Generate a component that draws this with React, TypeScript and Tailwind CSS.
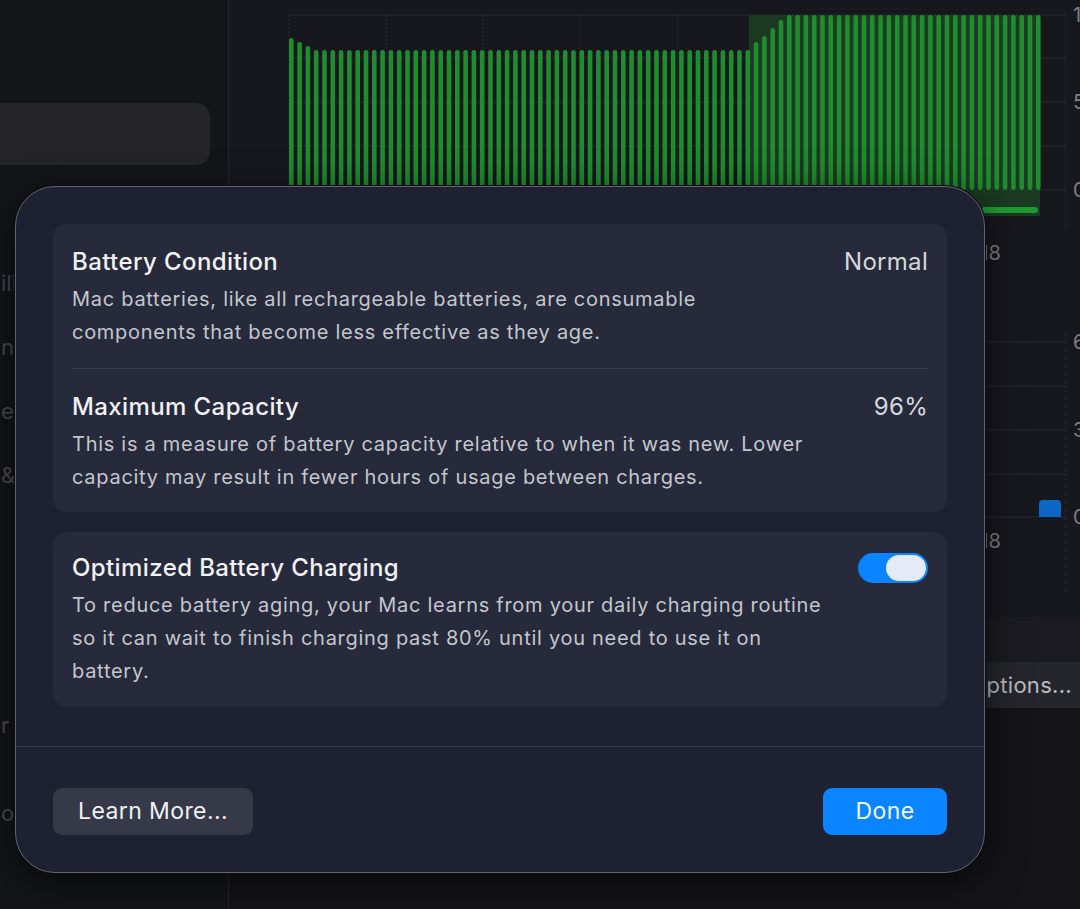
import React from 'react';

const FONT = 'Inter, "Noto Sans", "Liberation Sans", sans-serif';

// bar tops for the battery level chart (page y coordinates)
const barTops: number[] = (() => {
  const tops: number[] = [];
  for (let i = 0; i < 91; i++) {
    const x = 289 + i * 8.3;
    let top = 50;
    if (i === 0) top = 38;
    else if (i === 1) top = 42;
    else if (i === 2) top = 46;
    else if (x >= 751 && x < 758) top = 42;
    else if (x >= 758 && x < 766) top = 36;
    else if (x >= 766 && x < 774) top = 28;
    else if (x >= 774 && x < 782) top = 20;
    else if (x >= 782) top = 15;
    tops.push(top);
  }
  return tops;
})();

function LevelChart() {
  const vx = Array.from({ length: 9 }, (_, i) => 289 + i * 97.1);
  return (
    <svg width="851" height="270" viewBox="229 0 851 270" className="block">
      {[15, 58, 102, 146, 190].map((y) => (
        <line key={y} x1="289" x2="1066" y1={y} y2={y} stroke="#2a2a31" strokeWidth="1" />
      ))}
      {vx.map((x) => (
        <line key={x} x1={x} x2={x} y1="15" y2="230" stroke="#2c2c34" strokeWidth="1" strokeDasharray="2 2" />
      ))}
      <rect x="749" y="15" width="291" height="201" fill="#1a3a21" />
      {barTops.map((top, i) => (
        <rect key={i} x={289 + i * 8.3} y={top} width="4.6" height={190 - top} rx="2.3" fill="#1f8c2d" />
      ))}
      <rect x="982" y="207" width="56" height="6" rx="3" fill="#1f9a33" />
      <text x="1001" y="260" textAnchor="end" fontSize="20" fill="#7d7e85" fontFamily={FONT}>18</text>
      <text x="1073" y="22" fontSize="20" fill="#7d7e85" fontFamily={FONT}>100%</text>
      <text x="1073" y="109" fontSize="20" fill="#7d7e85" fontFamily={FONT}>50%</text>
      <text x="1073" y="197" fontSize="20" fill="#7d7e85" fontFamily={FONT}>0%</text>
    </svg>
  );
}

function UsageChart() {
  const vx = Array.from({ length: 9 }, (_, i) => 289 + i * 97.1);
  return (
    <svg width="851" height="330" viewBox="229 270 851 330" className="block">
      {[342, 386, 430, 474, 517].map((y) => (
        <line key={y} x1="289" x2="1066" y1={y} y2={y} stroke="#2a2a31" strokeWidth="1" />
      ))}
      {vx.map((x) => (
        <line key={x} x1={x} x2={x} y1="330" y2="592" stroke="#2c2c34" strokeWidth="1" strokeDasharray="2 2" />
      ))}
      <path d="M1039 517 V504 a4 4 0 0 1 4 -4 H1057 a4 4 0 0 1 4 4 V517 Z" fill="#0b66c4" />
      <text x="1001" y="548" textAnchor="end" fontSize="20" fill="#7d7e85" fontFamily={FONT}>18</text>
      <text x="1073" y="349" fontSize="20" fill="#7d7e85" fontFamily={FONT}>60m</text>
      <text x="1073" y="437" fontSize="20" fill="#7d7e85" fontFamily={FONT}>30m</text>
      <text x="1073" y="524" fontSize="20" fill="#7d7e85" fontFamily={FONT}>0m</text>
    </svg>
  );
}

function Section({
  title,
  value,
  lines,
  toggle,
  pt,
  pb,
}: {
  title: string;
  value?: string;
  lines: string[];
  toggle?: boolean;
  pt: string;
  pb: string;
}) {
  return (
    <div className={`${pt} ${pb}`}>
      <div className="flex items-center justify-between h-[32px]">
        <span className="text-[24px] leading-[32px] font-medium tracking-[0.4px] text-[#f1f2f5]">{title}</span>
        {value && <span className="text-[24px] leading-[32px] tracking-[0.3px] text-[#d6d8de]">{value}</span>}
        {toggle && (
          <div className="w-[70px] h-[30px] rounded-full bg-[#0a84ff] flex items-center justify-end px-[2px]">
            <div className="w-[40px] h-[26px] rounded-full bg-[#e4eaf7]" />
          </div>
        )}
      </div>
      <p className="mt-[5px] text-[20px] leading-[33px] tracking-[0.72px] text-[#c3c6ce] whitespace-nowrap">
        {lines.map((l, i) => (
          <React.Fragment key={i}>
            {l}
            {i < lines.length - 1 && <br />}
          </React.Fragment>
        ))}
      </p>
    </div>
  );
}

export default function App() {
  return (
    <div className="relative w-[1080px] h-[909px] overflow-hidden bg-[#17171e] flex" style={{ fontFamily: FONT }}>
      {/* Sidebar */}
      <div className="w-[229px] shrink-0 h-full bg-[#141519] border-r border-[#25262c] flex flex-col">
        <div className="h-[103px]" />
        <div className="w-[210px] h-[62px] rounded-r-[14px] bg-[#252529]" />
        <div className="flex flex-col text-[22px] text-[#4a4b52] leading-[26px] mt-[105px] gap-[38px] pl-[1px]">
          <span>ili</span>
          <span>nc</span>
          <span>e</span>
          <span>&amp;</span>
        </div>
        <div className="flex flex-col text-[22px] text-[#4a4b52] leading-[26px] mt-[224px] gap-[62px] pl-[1px]">
          <span>r</span>
          <span>o</span>
        </div>
      </div>

      {/* Main content */}
      <div className="flex-1 flex flex-col">
        <LevelChart />
        <UsageChart />
        <div className="h-[17px]" />
        <div className="h-[45px] bg-[#1b1b21]" />
        <div className="h-[46px] bg-[#25262c] flex items-center justify-end pr-[8px]">
          <span className="text-[22px] tracking-[0.3px] text-[#b9bbc1]">Options...</span>
        </div>
        <div className="flex-1 bg-[#141419]" />
      </div>

      {/* Modal sheet */}
      <div className="absolute left-[15px] top-[186px] w-[970px] h-[687px] rounded-[40px] border border-[#62656f] bg-[#1d2132] shadow-[0_0_0_1px_#0b0c10,0_10px_40px_rgba(0,0,0,0.6)] flex flex-col">
        <div className="px-[37px] pt-[37px] flex flex-col gap-[20px]">
          <div className="rounded-[14px] bg-[#262a3a] px-[19px]">
            <Section
              title="Battery Condition"
              value="Normal"
              lines={[
                'Mac batteries, like all rechargeable batteries, are consumable',
                'components that become less effective as they age.',
              ]}
              pt="pt-[22px]"
              pb="pb-[19px]"
            />
            <div className="h-px bg-[#3a3e4e]" />
            <Section
              title="Maximum Capacity"
              value="96%"
              lines={[
                'This is a measure of battery capacity relative to when it was new. Lower',
                'capacity may result in fewer hours of usage between charges.',
              ]}
              pt="pt-[22px]"
              pb="pb-[18px]"
            />
          </div>
          <div className="rounded-[14px] bg-[#262a3a] px-[19px]">
            <Section
              title="Optimized Battery Charging"
              toggle
              lines={[
                'To reduce battery aging, your Mac learns from your daily charging routine',
                'so it can wait to finish charging past 80% until you need to use it on',
                'battery.',
              ]}
              pt="pt-[20px]"
              pb="pb-[19px]"
            />
          </div>
        </div>
        <div className="mt-[39px] h-px bg-[#383c4b]" />
        <div className="flex-1 px-[37px] pt-[4px] flex items-center justify-between">
          <button className="h-[47px] w-[200px] rounded-[9px] bg-[#363948] text-[23px] tracking-[0.4px] text-[#f0f1f4]">
            Learn More...
          </button>
          <button className="h-[47px] w-[124px] rounded-[9px] bg-[#0a84ff] text-[23px] tracking-[0.4px] text-[#f2f7ff]">
            Done
          </button>
        </div>
      </div>
    </div>
  );
}
